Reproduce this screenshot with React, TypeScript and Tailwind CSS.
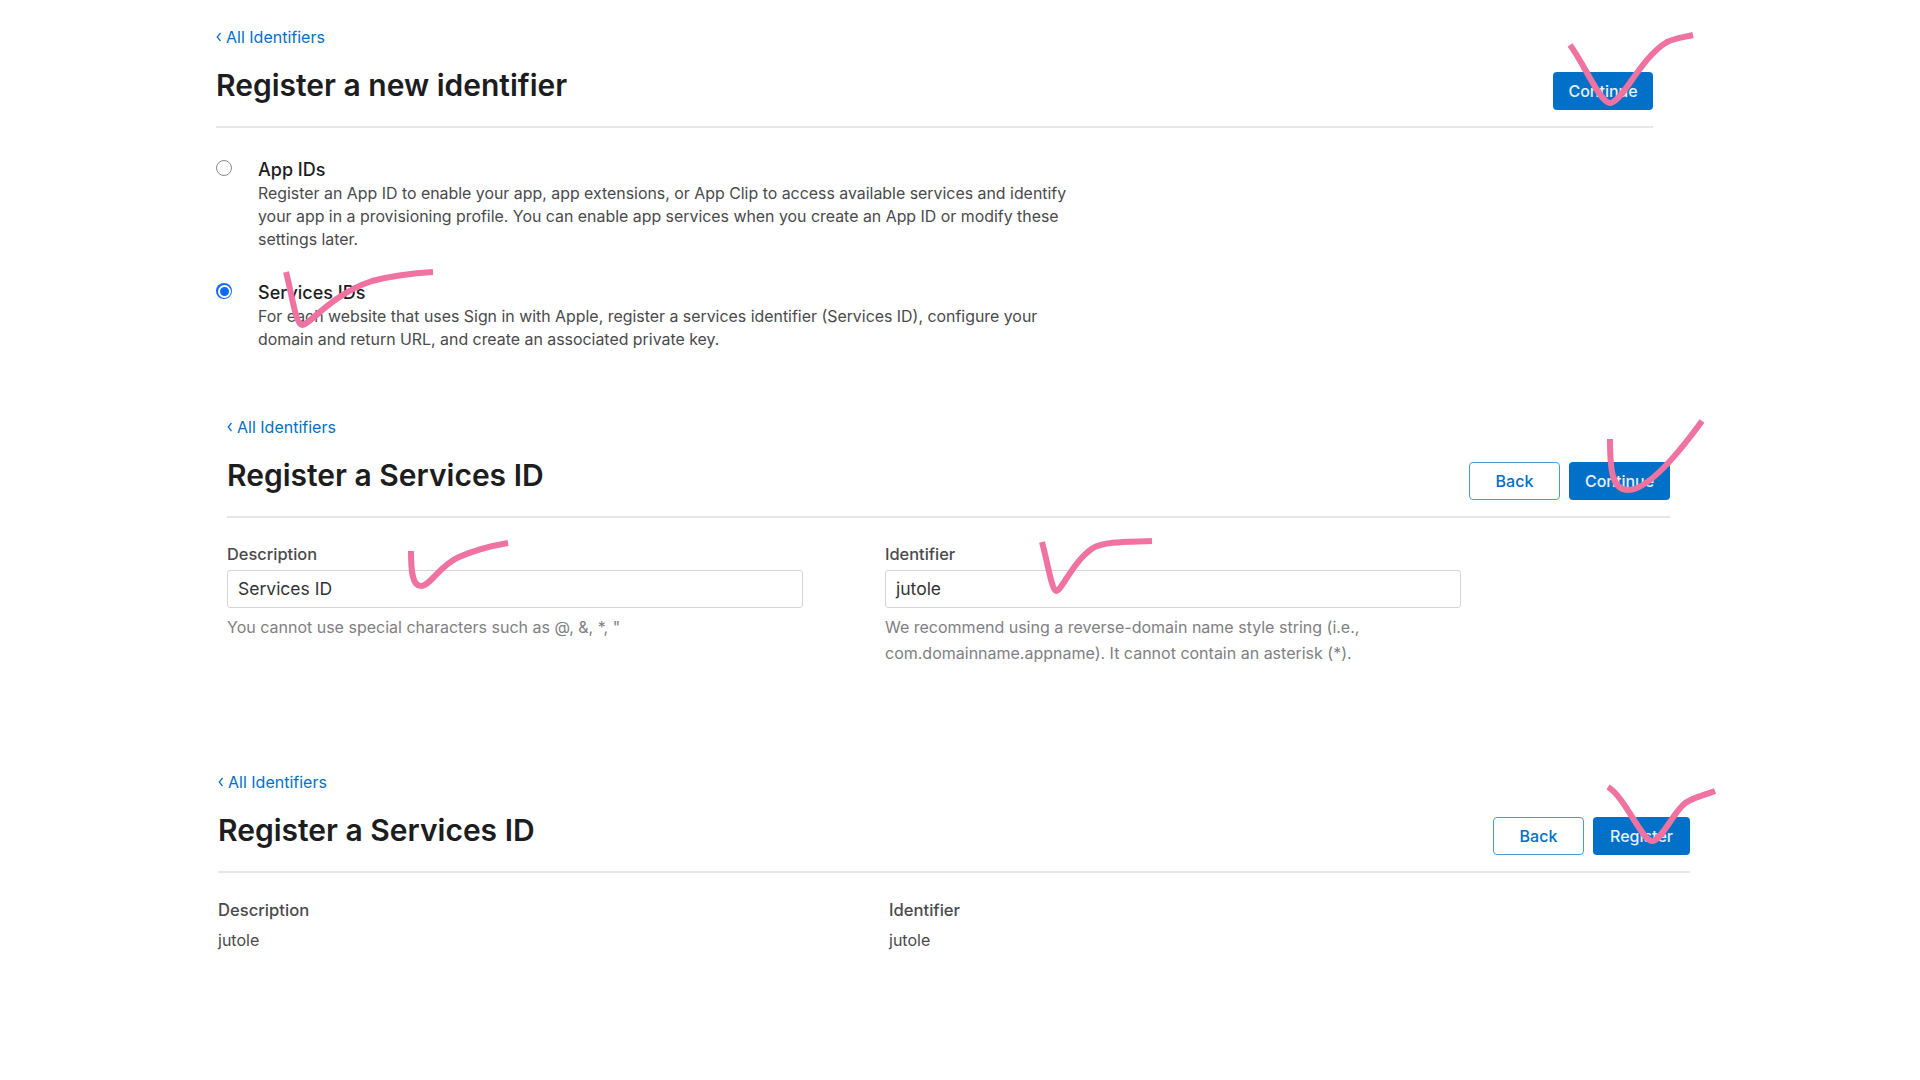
const sans = { fontFamily: 'Inter, "Liberation Sans", sans-serif' }

function BackLink() {
  return (
    <a className="flex h-5 items-center gap-[4px] text-[16px] leading-5 text-[#0070c9]">
      <svg width="6" height="10" viewBox="0 0 6 10" fill="none" stroke="#0070c9" strokeWidth="1.2">
        <path d="M4.5 1 L1.2 5 L4.5 9" />
      </svg>
      All Identifiers
    </a>
  )
}

function BlueButton({ label, width }: { label: string; width: string }) {
  return (
    <button className={`h-[38px] ${width} rounded-[4px] bg-[#0070c9] text-[16px] font-medium text-white/90`}>
      {label}
    </button>
  )
}

function BackButton() {
  return (
    <button className="h-[38px] w-[91px] rounded-[4px] border border-[#4a9bdc] bg-white text-[16px] font-medium text-[#0070c9]">
      Back
    </button>
  )
}

function Header({ title, children }: { title: string; children: React.ReactNode }) {
  return (
    <div className="mt-[20px] flex items-start justify-between border-b-2 border-[#e6e6e6] pb-[16px]">
      <h1 className="text-[30px] font-semibold leading-[36px] text-[#1d1d1f]">{title}</h1>
      <div className="mt-[5px] flex gap-[9px]">{children}</div>
    </div>
  )
}

function RadioRow({ checked, title, children }: { checked?: boolean; title: string; children: React.ReactNode }) {
  return (
    <div className="flex">
      <div className="w-[42px] shrink-0 pt-[2px]">
        {checked ? (
          <div className="flex h-4 w-4 items-center justify-center rounded-full bg-[#0a6cf5]">
            <div className="h-[13px] w-[13px] rounded-full border-2 border-white bg-[#0a6cf5]" />
          </div>
        ) : (
          <div className="h-4 w-4 rounded-full border border-[#8a8a8a] bg-white" />
        )}
      </div>
      <div className="w-[825px]">
        <div className="text-[18px] font-medium leading-[24px] text-[#1d1d1f]">{title}</div>
        <p className="text-[15.9px] leading-[23px] text-[#4a4a4c]">{children}</p>
      </div>
    </div>
  )
}

function Field({ label, value, children }: { label: string; value: string; children: React.ReactNode }) {
  return (
    <div className="w-[576px]">
      <div className="text-[16.4px] font-medium leading-5 text-[#4a4a4c]">{label}</div>
      <div className="mt-[6px] flex h-[38px] items-center rounded-[3px] border border-[#d6d6d6] bg-white px-[10px] text-[17.5px] text-[#333336]">
        {value}
      </div>
      <p className="mt-[6px] text-[16px] leading-[26px] text-[#808083]">{children}</p>
    </div>
  )
}

// the hand-drawn marks lying over the page
function Checks() {
  const marks = [
    'M1570 45 C1585 65 1600 103 1610 103 C1622 103 1640 58 1667 42 C1675 38 1685 37 1693 35',
    'M286 272 C292 295 296 325 302 325 C310 325 330 295 372 281 C395 275 415 273 433 272',
    'M411 551 C411 570 412 586 421 586 C430 586 440 565 459 557 C475 550 490 546 508 543',
    'M1042 542 C1047 560 1052 591 1056 591 C1062 591 1072 562 1093 548 C1105 541 1130 542 1152 541',
    'M1610 439 C1610 470 1612 490 1628 490 C1645 490 1670 465 1702 421',
    'M1608 787 C1625 797 1642 841 1652 841 C1662 841 1675 808 1687 802 C1695 797 1705 795 1715 791',
  ]
  return (
    <svg className="absolute inset-0" width="1920" height="1080" viewBox="0 0 1920 1080" fill="none">
      {marks.map((d) => (
        <path key={d} d={d} stroke="#ef72a0" strokeWidth="6" strokeLinejoin="round" />
      ))}
    </svg>
  )
}

export default function App() {
  return (
    <div className="relative h-[1080px] w-[1920px] overflow-hidden bg-white" style={sans}>
      {/* Choose identifier type */}
      <section className="ml-[216px] w-[1437px] pt-[27px]">
        <BackLink />
        <Header title="Register a new identifier">
          <BlueButton label="Continue" width="w-[100px]" />
        </Header>
        <div className="mt-[30px] flex flex-col gap-[30px]">
          <RadioRow title="App IDs">
            Register an App ID to enable your app, app extensions, or App Clip to access available services and identify
            your app in a provisioning profile. You can enable app services when you create an App ID or modify these
            settings later.
          </RadioRow>
          <RadioRow checked title="Services IDs">
            For each website that uses Sign in with Apple, register a services identifier (Services ID), configure your
            domain and return URL, and create an associated private key.
          </RadioRow>
        </div>
      </section>

      {/* Services ID form */}
      <section className="ml-[227px] mt-[66px] w-[1443px]">
        <BackLink />
        <Header title="Register a Services ID">
          <BackButton />
          <BlueButton label="Continue" width="w-[101px]" />
        </Header>
        <div className="mt-[26px] flex gap-[82px]">
          <Field label="Description" value="Services ID">
            You cannot use special characters such as @, &amp;, *, "
          </Field>
          <Field label="Identifier" value="jutole">
            We recommend using a reverse-domain name style string (i.e., com.domainname.appname). It cannot contain an
            asterisk (*).
          </Field>
        </div>
      </section>

      {/* Confirm */}
      <section className="ml-[218px] mt-[106px] w-[1472px]">
        <BackLink />
        <Header title="Register a Services ID">
          <BackButton />
          <BlueButton label="Register" width="w-[97px]" />
        </Header>
        <div className="mt-[27px] flex gap-[500px]">
          <div className="w-[171px]">
            <div className="text-[16.6px] font-medium leading-5 text-[#4a4a4c]">Description</div>
            <div className="mt-[10px] text-[16px] leading-5 text-[#4a4a4c]">jutole</div>
          </div>
          <div>
            <div className="text-[16.6px] font-medium leading-5 text-[#4a4a4c]">Identifier</div>
            <div className="mt-[10px] text-[16px] leading-5 text-[#4a4a4c]">jutole</div>
          </div>
        </div>
      </section>

      <Checks />
    </div>
  )
}
